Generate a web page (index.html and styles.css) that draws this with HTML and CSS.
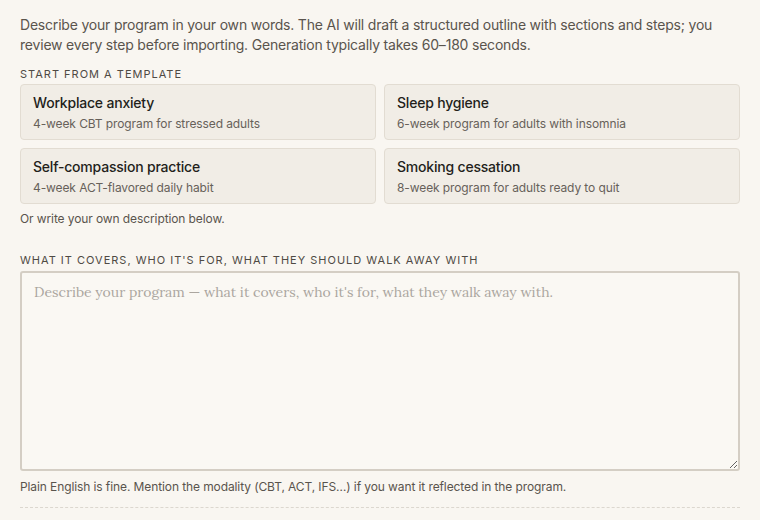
FILE: index.html
```html
<!DOCTYPE html>
<html lang="en">
<head>
<meta charset="utf-8">
<title>Describe your program</title>
<link rel="stylesheet" href="styles.css">
</head>
<body>
<main class="page">
  <p class="intro">Describe your program in your own words. The AI will draft a structured outline with sections and steps; you review every step before importing. Generation typically takes 60–180 seconds.</p>

  <div class="label">Start from a template</div>
  <div class="templates">
    <button class="card" type="button">
      <span class="card-title">Workplace anxiety</span>
      <span class="card-sub">4-week CBT program for stressed adults</span>
    </button>
    <button class="card" type="button">
      <span class="card-title">Sleep hygiene</span>
      <span class="card-sub">6-week program for adults with insomnia</span>
    </button>
    <button class="card" type="button">
      <span class="card-title">Self-compassion practice</span>
      <span class="card-sub">4-week ACT-flavored daily habit</span>
    </button>
    <button class="card" type="button">
      <span class="card-title">Smoking cessation</span>
      <span class="card-sub">8-week program for adults ready to quit</span>
    </button>
  </div>
  <p class="note">Or write your own description below.</p>

  <label class="label label-field" for="desc">What it covers, who it's for, what they should walk away with</label>
  <textarea id="desc" class="field" placeholder="Describe your program — what it covers, who it's for, what they walk away with."></textarea>
  <p class="hint">Plain English is fine. Mention the modality (CBT, ACT, IFS…) if you want it reflected in the program.</p>
  <hr class="divider">
</main>
</body>
</html>
```

FILE: styles.css
```css
html, body {
  margin: 0;
  padding: 0;
  background: #f9f6f1;
}
body {
  font-family: Inter, "Liberation Sans", Arial, sans-serif;
  color: #2a2622;
}
.page {
  padding: 15px 20px 0 20px;
  display: flex;
  flex-direction: column;
}
.intro {
  margin: 0;
  font-size: 14px;
  line-height: 20px;
  letter-spacing: -0.2px;
  color: #5a544d;
}
.label {
  display: block;
  margin-top: 12px;
  font-size: 11px;
  line-height: 14px;
  letter-spacing: 1px;
  text-transform: uppercase;
  color: #4f4a44;
}
.label-field {
  margin-top: 26px;
}
.templates {
  margin-top: 3px;
  display: grid;
  grid-template-columns: 1fr 1fr;
  gap: 8px;
}
.card {
  display: flex;
  flex-direction: column;
  align-items: flex-start;
  gap: 4px;
  height: 56px;
  box-sizing: border-box;
  padding: 9px 12px;
  background: #f1ede6;
  border: 1px solid #e2dcd2;
  border-radius: 4px;
  font-family: inherit;
  text-align: left;
  cursor: pointer;
}
.card-title {
  font-size: 14px;
  line-height: 18px;
  font-weight: 500;
  letter-spacing: -0.2px;
  color: #231f1b;
}
.card-sub {
  font-size: 12px;
  line-height: 16px;
  letter-spacing: -0.1px;
  color: #67615a;
}
.note {
  margin: 7px 0 0;
  font-size: 12px;
  line-height: 16px;
  letter-spacing: -0.1px;
  color: #5a544d;
}
.field {
  margin-top: 4px;
  display: block;
  box-sizing: border-box;
  width: 100%;
  height: 200px;
  padding: 8px 12px;
  background: #faf8f3;
  border: 2px solid #d4cec4;
  border-radius: 3px;
  font-family: Lora, "DejaVu Serif", "Liberation Serif", serif;
  font-size: 14px;
  line-height: 22px;
  color: #2a2622;
  resize: vertical;
  outline: none;
}
.field::placeholder {
  color: #aba69f;
}
.hint {
  margin: 8px 0 0;
  font-size: 12px;
  line-height: 16px;
  letter-spacing: -0.1px;
  color: #5a544d;
}
.divider {
  margin: 12px 0 0;
  border: 0;
  border-top: 1px dashed #dcd7cf;
  height: 0;
}
```
